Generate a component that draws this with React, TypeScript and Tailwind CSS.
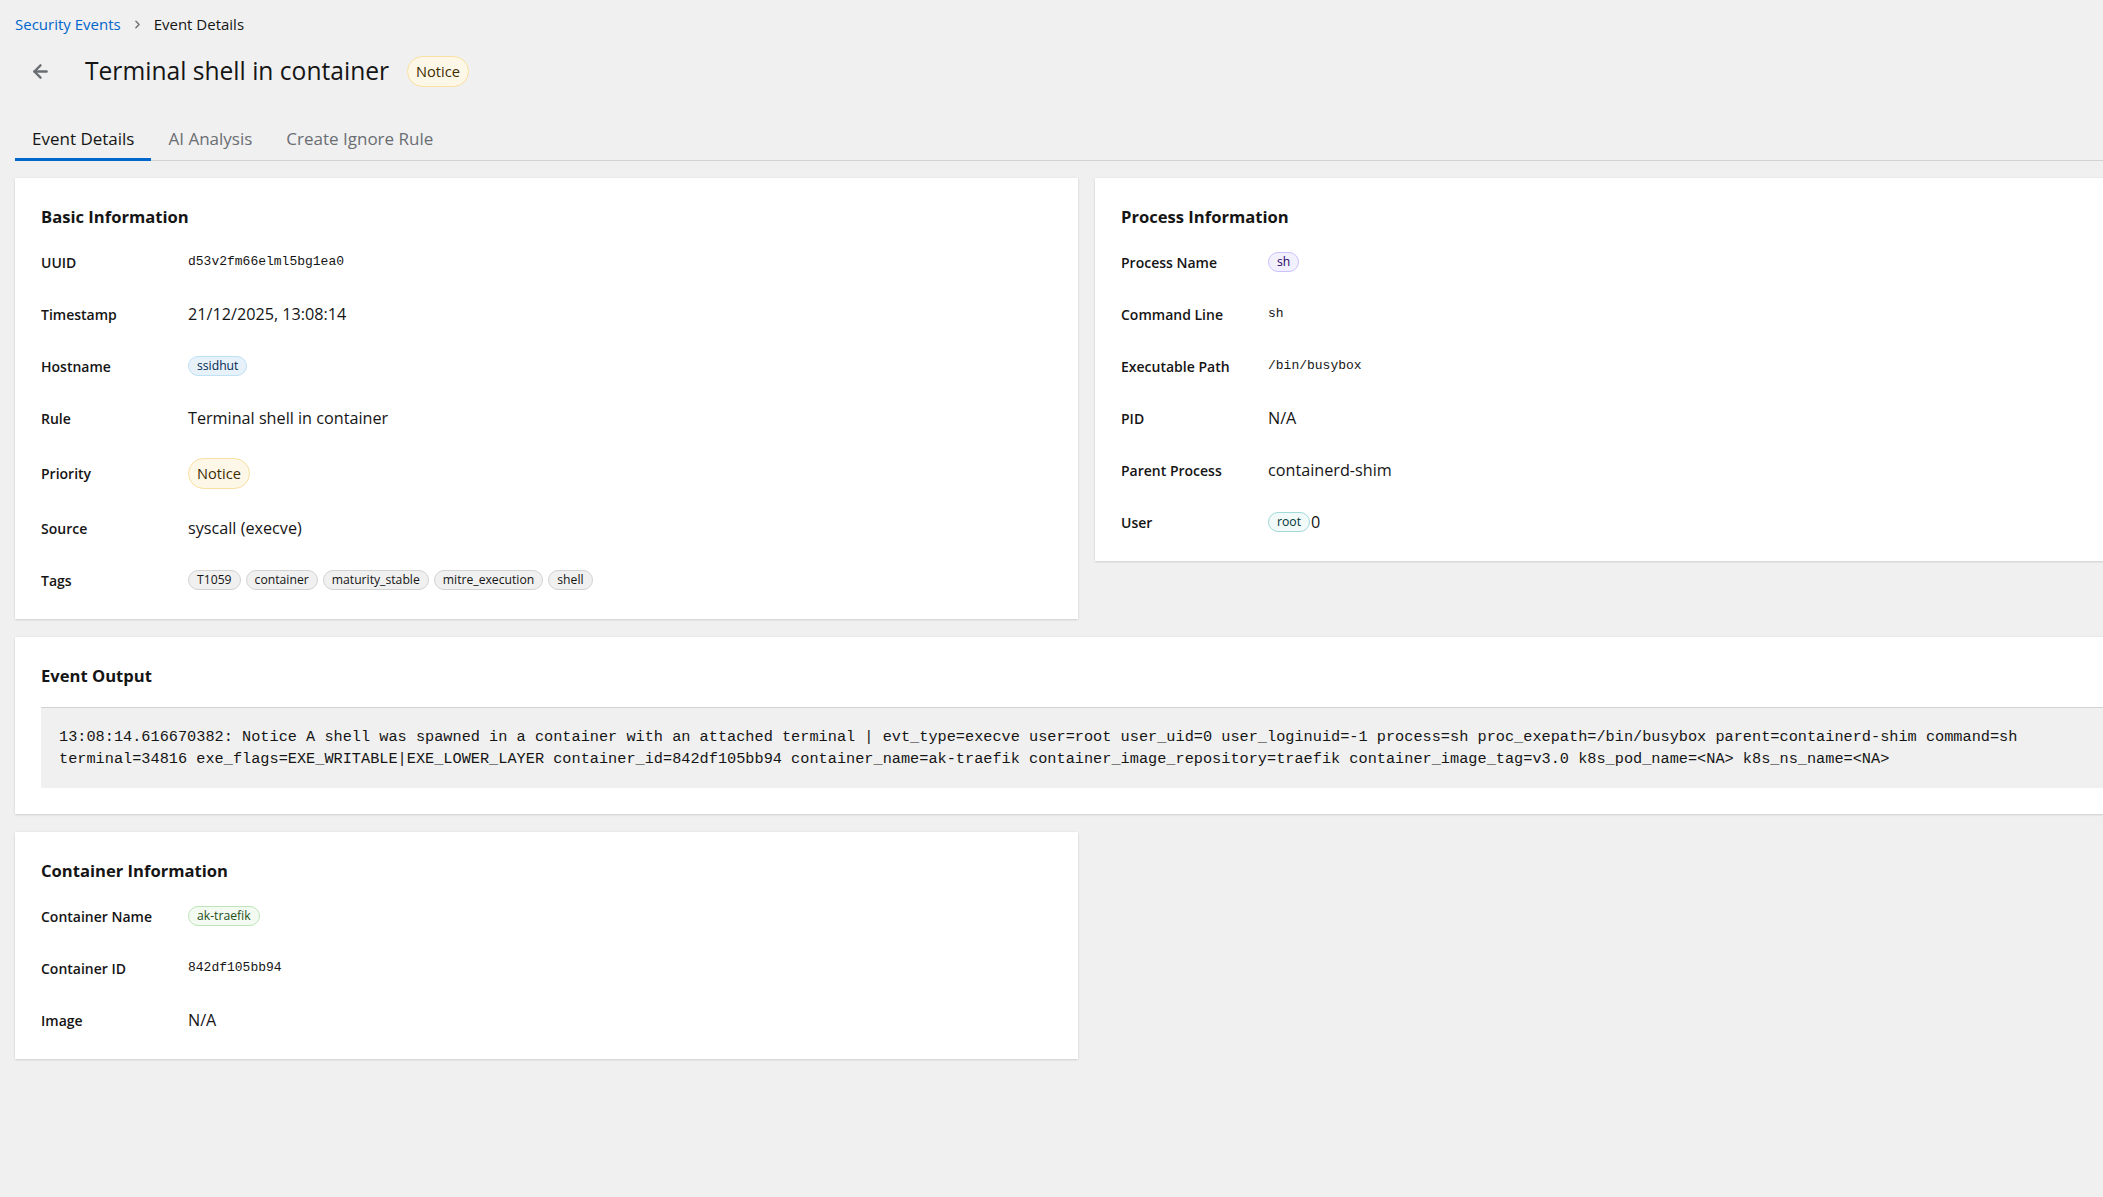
import React from 'react'
import { ArrowLeft, ChevronRight } from 'lucide-react'

type Tone = 'blue' | 'purple' | 'cyan' | 'green' | 'gold' | 'grey'

const toneClasses: Record<Tone, string> = {
  blue: 'bg-[#e7f1fa] border-[#bee1f4] text-[#002952]',
  purple: 'bg-[#f2f0fc] border-[#cbc1ff] text-[#1f0066]',
  cyan: 'bg-[#f2f9f9] border-[#a2d9d9] text-[#003737]',
  green: 'bg-[#f3faf2] border-[#bde5b8] text-[#1e4f18]',
  gold: 'bg-[#fdf7e7] border-[#f9e0a2] text-[#3d2c00]',
  grey: 'bg-[#f0f0f0] border-[#d2d2d2] text-[#151515]',
}

const Label = ({ tone, children }: { tone: Tone; children: React.ReactNode }) => (
  <span
    className={`inline-flex items-center h-[20px] px-[8px] rounded-full border text-[12.2px] leading-none ${toneClasses[tone]}`}
  >
    {children}
  </span>
)

const BigLabel = ({ children }: { children: React.ReactNode }) => (
  <span className="inline-flex items-center h-[31px] px-[8px] rounded-full border bg-[#fdf7e7] border-[#f9e0a2] text-[#3d2c00] text-[14.6px] leading-none">
    {children}
  </span>
)

const Mono = ({ children }: { children: React.ReactNode }) => (
  <span className="font-['Liberation_Mono',monospace] text-[13px] text-[#151515]">{children}</span>
)

const Row = ({ label, children, tall }: { label: string; children: React.ReactNode; tall?: boolean }) => (
  <div className={`flex items-center ${tall ? 'min-h-[32px]' : 'min-h-[26px]'}`}>
    <div className="w-[147px] shrink-0 text-[14px] font-semibold text-[#151515]">{label}</div>
    <div className="flex items-center flex-wrap text-[16.2px] leading-[26px] text-[#151515]">{children}</div>
  </div>
)

const Card = ({ title, children }: { title: string; children: React.ReactNode }) => (
  <div className="bg-white px-[26px] pt-[28px] pb-[26px] shadow-[0_1px_2px_rgba(3,3,3,0.12),0_0_2px_rgba(3,3,3,0.06)]">
    <h2 className="text-[16.6px] leading-[22px] font-bold text-[#151515] mb-[21px]">{title}</h2>
    {children}
  </div>
)

export default function App() {
  const tags = ['T1059', 'container', 'maturity_stable', 'mitre_execution', 'shell']
  return (
    <div className="min-h-screen w-full overflow-hidden bg-[#f0f0f0] font-['Open_Sans',sans-serif] text-[#151515]">
      <div className="w-[2158px] pl-[15px] pt-[14px]">
        {/* breadcrumb */}
        <nav className="flex items-center h-[21px] text-[15px]">
          <span className="text-[#0066cc]">Security Events</span>
          <ChevronRight className="mx-[10px] text-[#6a6e73]" size={13} strokeWidth={2.5} />
          <span>Event Details</span>
        </nav>

        {/* title */}
        <div className="flex items-center h-[32px] mt-[20px]">
          <ArrowLeft className="ml-[15px] text-[#6a6e73]" size={21} strokeWidth={2.7} />
          <h1 className="ml-[34px] text-[24.6px] leading-[32px] font-medium">Terminal shell in container</h1>
          <span className="ml-[18px]">
            <BigLabel>Notice</BigLabel>
          </span>
        </div>

        {/* tabs */}
        <div className="flex mt-[30px] border-b border-[#d2d2d2] h-[44px]">
          <div className="relative px-[17px] flex items-center text-[17px] text-[#151515]">
            Event Details
            <span className="absolute left-0 right-0 -bottom-px h-[3px] bg-[#0066cc]" />
          </div>
          <div className="px-[17px] flex items-center text-[17px] text-[#6a6e73]">AI Analysis</div>
          <div className="px-[17px] flex items-center text-[17px] text-[#6a6e73]">Create Ignore Rule</div>
        </div>

        {/* content */}
        <div className="grid grid-cols-[1063px_1063px] gap-x-[17px] gap-y-[18px] mt-[17px] items-start">
          <Card title="Basic Information">
            <div className="flex flex-col gap-[26px]">
              <Row label="UUID">
                <Mono>d53v2fm66elml5bg1ea0</Mono>
              </Row>
              <Row label="Timestamp">21/12/2025, 13:08:14</Row>
              <Row label="Hostname">
                <Label tone="blue">ssidhut</Label>
              </Row>
              <Row label="Rule">Terminal shell in container</Row>
              <Row label="Priority" tall>
                <BigLabel>Notice</BigLabel>
              </Row>
              <Row label="Source">syscall (execve)</Row>
              <Row label="Tags">
                <div className="flex gap-[5px]">
                  {tags.map((t) => (
                    <Label key={t} tone="grey">
                      {t}
                    </Label>
                  ))}
                </div>
              </Row>
            </div>
          </Card>

          <Card title="Process Information">
            <div className="flex flex-col gap-[26px]">
              <Row label="Process Name">
                <Label tone="purple">sh</Label>
              </Row>
              <Row label="Command Line">
                <Mono>sh</Mono>
              </Row>
              <Row label="Executable Path">
                <Mono>/bin/busybox</Mono>
              </Row>
              <Row label="PID">N/A</Row>
              <Row label="Parent Process">containerd-shim</Row>
              <Row label="User">
                <Label tone="cyan">root</Label>
                <span className="ml-px">0</span>
              </Row>
            </div>
          </Card>

          <div className="col-span-2">
            <div className="bg-white px-[26px] pt-[28px] pb-[26px] shadow-[0_1px_2px_rgba(3,3,3,0.12),0_0_2px_rgba(3,3,3,0.06)]">
              <h2 className="text-[16.6px] leading-[22px] font-bold text-[#151515] mb-[20px]">Event Output</h2>
              <pre className="bg-[#f0f0f0] border-t border-[#d2d2d2] px-[18px] py-[18px] font-['Liberation_Mono',monospace] text-[15.25px] leading-[22px] text-[#151515] whitespace-pre-wrap">
                {'13:08:14.616670382: Notice A shell was spawned in a container with an attached terminal | evt_type=execve user=root user_uid=0 user_loginuid=-1 process=sh proc_exepath=/bin/busybox parent=containerd-shim command=sh\nterminal=34816 exe_flags=EXE_WRITABLE|EXE_LOWER_LAYER container_id=842df105bb94 container_name=ak-traefik container_image_repository=traefik container_image_tag=v3.0 k8s_pod_name=<NA> k8s_ns_name=<NA>'}
              </pre>
            </div>
          </div>

          <Card title="Container Information">
            <div className="flex flex-col gap-[26px]">
              <Row label="Container Name">
                <Label tone="green">ak-traefik</Label>
              </Row>
              <Row label="Container ID">
                <Mono>842df105bb94</Mono>
              </Row>
              <Row label="Image">N/A</Row>
            </div>
          </Card>
        </div>
      </div>
    </div>
  )
}
